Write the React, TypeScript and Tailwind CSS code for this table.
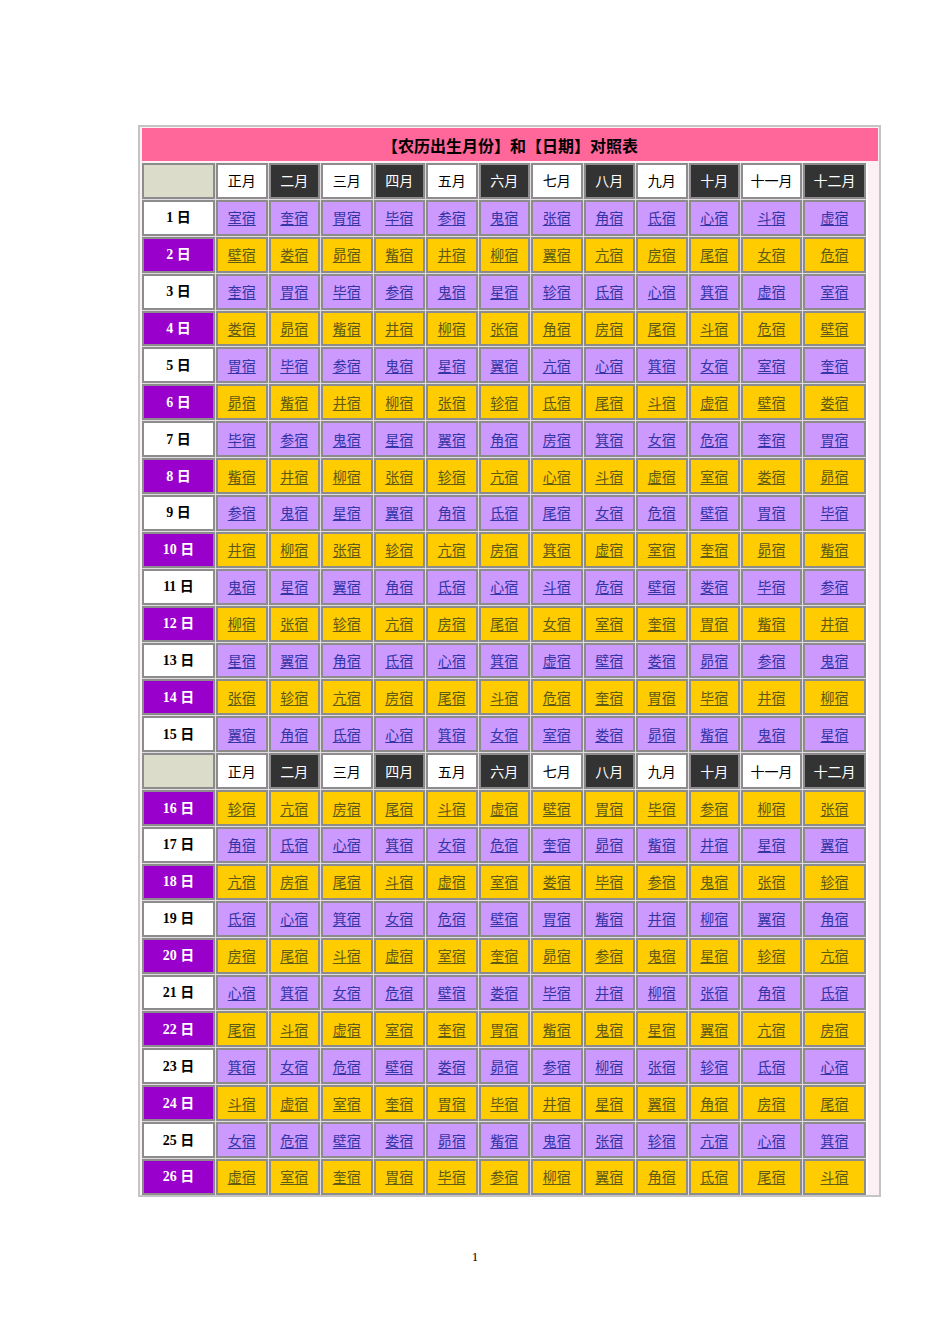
import React from "react";

const MANSIONS = [
  "角", "亢", "氐", "房", "心", "尾", "箕", "斗", "女", "虚", "危", "室", "壁", "奎",
  "娄", "胃", "昴", "毕", "觜", "参", "井", "鬼", "柳", "星", "张", "翼", "轸",
];

const MONTHS = ["正月", "二月", "三月", "四月", "五月", "六月", "七月", "八月", "九月", "十月", "十一月", "十二月"];

// index of the mansion on day 1 of each month
const STARTS = [11, 13, 15, 17, 19, 21, 24, 0, 2, 4, 7, 9];

const cjk = "font-['Noto_Sans_CJK_SC',sans-serif]";
const cellBase = "flex items-center justify-center border-2 border-[#8c8c8c] h-[35.9px]";

function HeaderRow() {
  return (
    <>
      <div className={`${cellBase} bg-[#dcdccb]`} />
      {MONTHS.map((m, i) => (
        <div
          key={m}
          className={`${cellBase} ${cjk} text-[14px] ${
            i % 2 === 0 ? "bg-white text-black" : "bg-[#333333] text-white"
          }`}
        >
          {m}
        </div>
      ))}
    </>
  );
}

function DayRow({ day }: { day: number }) {
  const even = day % 2 === 0;
  return (
    <>
      <div
        className={`${cellBase} text-[14px] font-bold font-['Liberation_Serif','Noto_Sans_CJK_SC',serif] ${
          even ? "bg-[#9900cc] text-white" : "bg-white text-black"
        }`}
      >
        {day} 日
      </div>
      {STARTS.map((s, i) => (
        <div key={i} className={`${cellBase} ${even ? "bg-[#ffcc00]" : "bg-[#cc99ff]"}`}>
          <a
            href="#"
            className={`${cjk} text-[14px] underline underline-offset-2 ${
              even ? "text-[#5f5a14]" : "text-[#3535a8]"
            }`}
          >
            {MANSIONS[(s + day - 1) % 27]}宿
          </a>
        </div>
      ))}
    </>
  );
}

export default function App() {
  const first = Array.from({ length: 15 }, (_, i) => i + 1);
  const second = Array.from({ length: 11 }, (_, i) => i + 16);

  return (
    <div className="w-[950px] min-h-[1344px] bg-white pt-[125px]">
      <div className="ml-[138px] w-[743px] border-2 border-[#c4c4c4] bg-[#fdf0f5] pt-[1px] pl-[2px] pr-[1px] pb-0">
        <div
          className={`h-[33px] bg-[#ff6699] flex items-center justify-center text-[16px] font-bold text-black ${cjk}`}
        >
          【农历出生月份】和【日期】对照表
        </div>
        <div className="mt-[2px] w-[726px] border-r-2 border-r-white">
          <div className="grid grid-cols-[73px_repeat(10,51.5px)_61px_63px] gap-[1px] bg-[#e2dce2] w-[724px]">
            <HeaderRow />
            {first.map((d) => (
              <DayRow key={d} day={d} />
            ))}
            <HeaderRow />
            {second.map((d) => (
              <DayRow key={d} day={d} />
            ))}
          </div>
        </div>
      </div>
      <div className="mt-[50px] text-center text-[13px] text-black font-['Liberation_Serif',serif]">1</div>
    </div>
  );
}
